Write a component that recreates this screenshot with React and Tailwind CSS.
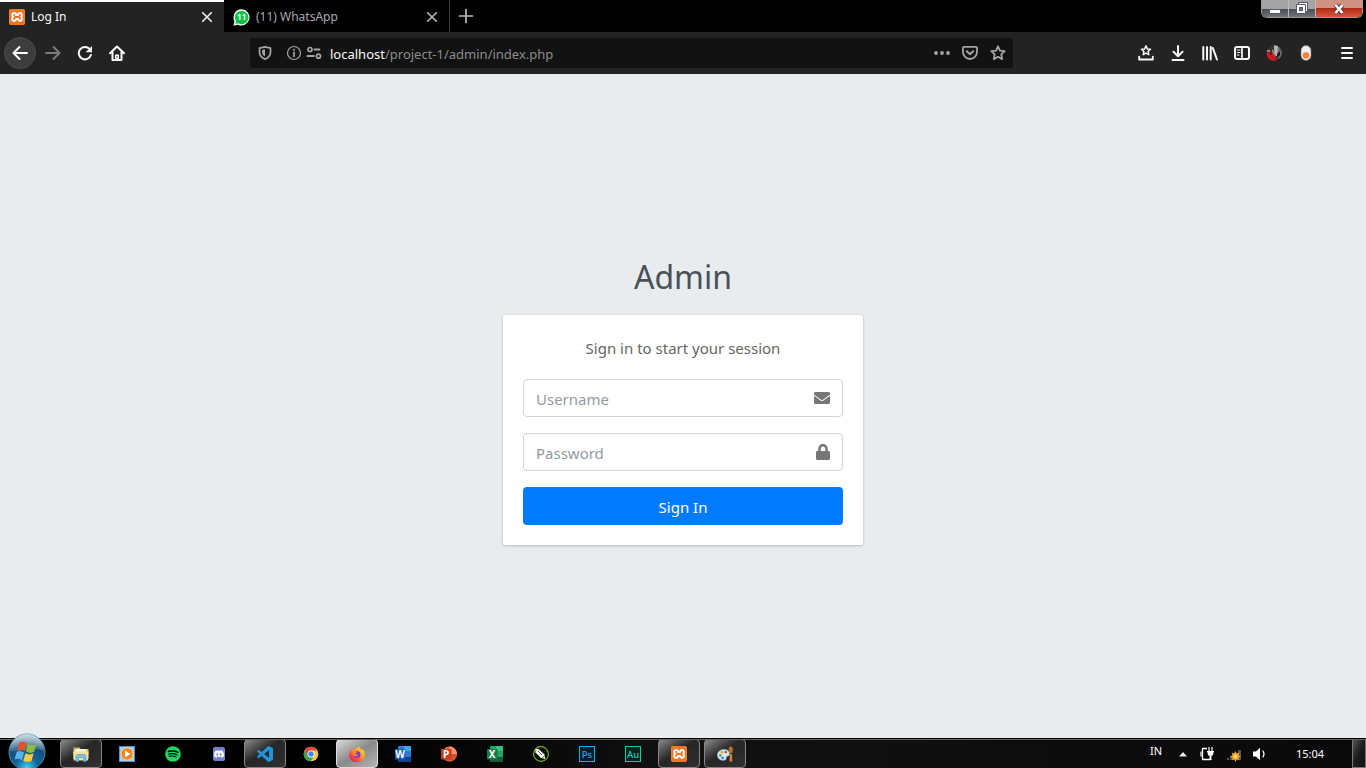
import React from "react";
import { FaEnvelope, FaLock, FaSpotify } from "react-icons/fa";
import { SiDiscord, SiXampp } from "react-icons/si";

const line = { fill: "none", stroke: "currentColor", strokeWidth: 2, strokeLinecap: "round", strokeLinejoin: "round" };

function Icon({ children, className = "size-4", box = "0 0 16 16" }) {
  return (
    <svg viewBox={box} className={`${className} shrink-0`} aria-hidden="true">
      {children}
    </svg>
  );
}

function XamppIcon() {
  return (
    <span className="flex size-4 items-center justify-center rounded-sm bg-white">
      <SiXampp className="size-4 text-[#f37623]" />
    </span>
  );
}

function CloseMark() {
  return (
    <Icon className="size-4">
      <path d="M3.7 3.7l8.6 8.6M12.3 3.7l-8.6 8.6" {...line} strokeWidth="1.6" />
    </Icon>
  );
}

function TabBar() {
  return (
    <div className="flex h-8 bg-black text-[12px] leading-4">
      <div className="flex w-56 items-center gap-1.5 border-t-2 border-white bg-[#232323] pr-[9px] pl-[9px] text-[#f9f9fa]">
        <XamppIcon />
        <span className="flex-1">Log In</span>
        <button type="button" aria-label="Close tab Log In" className="text-[#f0f0f0]">
          <CloseMark />
        </button>
      </div>
      <div className="flex w-[226px] items-center gap-1.5 border-r border-[#3a3a3a] pt-0.5 pr-[9px] pl-[9px] text-[#a9a9ab]">
        <Icon className="size-[17px]" box="0 0 17 17">
          <path d="M8.600.300a8.100 8.100 0 1 1-3.700 15.400L.400 16.700l1.100-4.400A8.100 8.100 0 0 1 8.600.300z" fill="#fff" />
          <path d="M8.600 1.700a6.800 6.800 0 1 1-3.500 12.600l-2.900.8.8-2.900A6.800 6.800 0 0 1 8.600 1.700z" fill="#0cc143" />
          <text x="8.700" y="11.400" fontSize="8" fontWeight="700" textAnchor="middle" fill="#fff">
            11
          </text>
        </Icon>
        <span className="flex-1">(11) WhatsApp</span>
        <button type="button" aria-label="Close tab WhatsApp" className="text-[#b8b8b8]">
          <CloseMark />
        </button>
      </div>
      <button type="button" aria-label="New tab" className="flex w-8 items-center justify-center text-[#bcbcbe]">
        <Icon>
          <path d="M8 1.500v13M1.500 8h13" {...line} strokeWidth="1.700" />
        </Icon>
      </button>
      <div className="mr-[3px] ml-auto flex h-[18px] overflow-hidden rounded-b-md border border-t-0 border-[#999]">
        <button
          type="button"
          aria-label="Minimize"
          className="flex w-[27px] items-center justify-center border-r border-[#b9b9b9] bg-linear-to-b from-[#a4a4a4] from-50% via-[#484b53] via-51% to-[#72737a]"
        >
          <Icon>
            <rect x="2.500" y="8.500" width="11" height="4" rx=".5" fill="#fff" stroke="#55586c" />
          </Icon>
        </button>
        <button
          type="button"
          aria-label="Restore"
          className="flex w-[27px] items-center justify-center border-r border-[#b9b9b9] bg-linear-to-b from-[#a4a4a4] from-50% via-[#484b53] via-51% to-[#72737a]"
        >
          <Icon>
            <path d="M4.500 1.500h9v9h-9z" fill="#fff" stroke="#55586c" />
            <path d="M2.500 3.500h9v9h-9z" fill="#fff" stroke="#55586c" />
            <rect x="5.500" y="6.500" width="3" height="3" fill="#777" stroke="#55586c" />
          </Icon>
        </button>
        <button
          type="button"
          aria-label="Close"
          className="flex w-[46px] items-center justify-center bg-linear-to-b from-[#cf9181] from-45% via-[#b02a12] via-50% to-[#d9583c]"
        >
          <Icon>
            <path d="M4.500 4l7 8M11.500 4l-7 8" stroke="#55404c" strokeWidth="4.500" />
            <path d="M4.500 4l7 8M11.500 4l-7 8" stroke="#fff" strokeWidth="2.600" />
          </Icon>
        </button>
      </div>
    </div>
  );
}

function ToolButton({ label, children, className = "text-[#f9f9fa]" }) {
  return (
    <button type="button" aria-label={label} className={`flex size-8 shrink-0 items-center justify-center rounded-full ${className}`}>
      {children}
    </button>
  );
}

const STAR = "M8 1.300l2 4.300 4.700.6-3.400 3.200.9 4.700L8 11.800l-4.200 2.300.9-4.700L1.300 6.200 6 5.600z";

function Toolbar() {
  return (
    <div className="flex h-[42px] items-center bg-[#232323] pr-[3px] pl-1">
      <ToolButton label="Back" className="mr-px border border-[#4c4c4c] bg-[#3d3d3d] text-white">
        <Icon>
          <path d="M15 8H1.500M7.500 2L1.500 8l6 6" {...line} />
        </Icon>
      </ToolButton>
      <ToolButton label="Forward" className="text-[#7b7b7b]">
        <Icon>
          <path d="M1 8h13.500M8.500 2l6 6-6 6" {...line} />
        </Icon>
      </ToolButton>
      <ToolButton label="Reload">
        <Icon>
          <path d="M12.600 4A6.200 6.200 0 1 0 13.900 10" {...line} />
          <path d="M15 1v6.300H8.700z" fill="currentColor" />
        </Icon>
      </ToolButton>
      <ToolButton label="Home">
        <Icon>
          <path d="M1 8.300L8 1.500l7 6.800M3.500 7v8h9V7" {...line} />
          <path d="M6 14.500V9.500h4v5z" fill="currentColor" />
          <path d="M8 11v1.500" stroke="#232323" />
        </Icon>
      </ToolButton>

      <div className="mx-[117px] flex h-[30px] min-w-0 flex-1 items-center rounded-xs bg-[#121212] pr-[7px] pl-[7px] text-[#a5a5a5]">
        <Icon>
          <path d="M8 1.800l5.500 1.300v4c0 3.600-2.300 5.800-5.500 7.200-3.200-1.400-5.500-3.600-5.500-7.200v-4z" {...line} strokeWidth="1.700" />
          <path d="M8 4.300v7.300c-1.700-1-2.900-2.300-2.900-4.500V5z" fill="currentColor" />
        </Icon>
        <Icon className="ml-[13px] size-4">
          <circle cx="8" cy="8" r="6.500" {...line} strokeWidth="1.200" />
          <path d="M8 7.300v4" {...line} strokeWidth="1.700" />
          <circle cx="8" cy="4.800" r="1" fill="currentColor" />
        </Icon>
        <Icon className="ml-1 size-4">
          <circle cx="4" cy="4.500" r="2" {...line} strokeWidth="1.700" />
          <path d="M8.500 4.500h5M1.500 11h6.500" {...line} strokeWidth="1.900" />
          <circle cx="12.500" cy="11.200" r="2" {...line} strokeWidth="1.700" />
        </Icon>
        <span className="ml-2 pt-px text-[13px] leading-5 text-[#8d8d8d]">
          <span className="text-[#f9f9fa]">localhost</span>/project-1/admin/index.php
        </span>
        <div className="ml-auto flex gap-3">
          <button type="button" aria-label="Page actions">
            <Icon>
              <g fill="currentColor">
                <circle cx="2" cy="8" r="1.900" />
                <circle cx="8" cy="8" r="1.900" />
                <circle cx="14" cy="8" r="1.900" />
              </g>
            </Icon>
          </button>
          <button type="button" aria-label="Save to Pocket">
            <Icon>
              <path d="M2 1.900h12a1 1 0 0 1 1 1V7A7 7 0 0 1 1 7V2.900a1 1 0 0 1 1-1z" {...line} strokeWidth="1.800" />
              <path d="M4.800 6.200L8 9.300l3.200-3.100" {...line} />
            </Icon>
          </button>
          <button type="button" aria-label="Bookmark this page">
            <Icon>
              <path d={STAR} {...line} strokeWidth="1.800" />
            </Icon>
          </button>
        </div>
      </div>

      <ToolButton label="Bookmarks menu">
        <Icon>
          <path d="M8 .9l1.300 3 3.200.4-2.400 2.200.7 3.200L8 8.100 5.200 9.700l.7-3.200-2.400-2.200 3.200-.4z" {...line} strokeWidth="1.500" />
          <path d="M1.200 11.800v2.700h13.600v-2.700" {...line} strokeWidth="1.900" />
        </Icon>
      </ToolButton>
      <ToolButton label="Downloads">
        <Icon>
          <path d="M8 1v10M3.500 6.800L8 11.200l4.500-4.400M2.500 15h11" {...line} />
        </Icon>
      </ToolButton>
      <ToolButton label="Library">
        <Icon>
          <path d="M1.300 2v12.500M5 2v12.500M8.700 2v12.500M10.800 3l4.200 11.500" {...line} />
        </Icon>
      </ToolButton>
      <ToolButton label="Sidebars">
        <Icon>
          <rect x="1" y="2" width="14" height="12" rx="2" {...line} />
          <path d="M8 2v12" {...line} strokeWidth="1.700" />
          <path d="M3.300 5h2.700M3.300 7.500h2.700M3.300 10h1.700" {...line} strokeWidth="1.100" />
        </Icon>
      </ToolButton>
      <ToolButton label="Account">
        <Icon>
          <clipPath id="avatar">
            <circle cx="8" cy="8" r="7.800" />
          </clipPath>
          <g clipPath="url(#avatar)">
            <path d="M0 0h16v16H0z" fill="#39332f" />
            <path d="M8 0h4l-.5 11-3 1z" fill="#b8babd" />
            <path d="M12 1h4v11l-4 2z" fill="#6d6c6b" />
            <path d="M1 8l4-1 4 4 .5 5H4L1 12z" fill="#d01820" />
            <path d="M1 5h3v2H1zM6 4l2 2v4L6 7z" fill="#b4776c" />
            <path d="M4 7l2 2-2 1zM11 9l3-3v4l-3 3z" fill="#171a20" />
            <path d="M9 10l2 2v4H9z" fill="#8e2025" />
          </g>
        </Icon>
      </ToolButton>
      <ToolButton label="Extension">
        <Icon>
          <rect x="3" y=".5" width="10" height="15" rx="5" fill="#eceded" stroke="#777" strokeWidth=".6" />
          <circle cx="8" cy="10.500" r="3.300" fill="#f78234" />
        </Icon>
      </ToolButton>
      <ToolButton label="Open menu" className="ml-[9px] text-[#f9f9fa]">
        <Icon>
          <path d="M3 3h10M3 8h10M3 13h10" {...line} />
        </Icon>
      </ToolButton>
    </div>
  );
}

function Field({ type, label, children }) {
  return (
    <label className="mb-4 flex h-[38px] items-center rounded border border-[#ced4da] bg-white pr-3 text-[#777]">
      <input
        type={type}
        aria-label={label}
        placeholder={label}
        className="h-full min-w-0 flex-1 bg-transparent pt-0.5 pl-3 text-[15px] text-[#495057] outline-none placeholder:text-[#939ba2]"
      />
      {children}
    </label>
  );
}

function LoginPage() {
  return (
    <main className="flex min-h-0 flex-1 flex-col items-center justify-center bg-[#e9ecef]">
      <div className="w-[360px] max-w-full">
        <h1 className="mb-3.5 pt-0.5 text-center text-[32px] leading-[48px] text-[#495057]">Admin</h1>
        <form
          onSubmit={(e) => e.preventDefault()}
          className="mb-4 rounded-xs bg-white p-5 shadow-[0_0_1px_rgba(0,0,0,0.13),0_1px_3px_rgba(0,0,0,0.2)]"
        >
          <p className="mb-5 pt-0.5 text-center text-[15px] leading-[22px] text-[#666]">Sign in to start your session</p>
          <Field type="text" label="Username">
            <FaEnvelope className="size-4" />
          </Field>
          <Field type="password" label="Password">
            <FaLock className="-mr-px size-4" />
          </Field>
          <button type="submit" className="h-[38px] w-full rounded bg-[#007bff] pt-0.5 text-[15px] text-white">
            Sign In
          </button>
        </form>
      </div>
    </main>
  );
}

function StartOrb() {
  return (
    <Icon className="size-[38px]" box="0 0 38 38">
      <defs>
        <radialGradient id="orb" cx=".5" cy=".95" r=".9">
          <stop offset="0" stopColor="#3fd5fa" />
          <stop offset=".35" stopColor="#12649c" />
          <stop offset=".7" stopColor="#164e7a" />
          <stop offset="1" stopColor="#7b9db3" />
        </radialGradient>
        <linearGradient id="gloss" x1="0" y1="0" x2="0" y2="1">
          <stop offset="0" stopColor="#fff" stopOpacity=".6" />
          <stop offset="1" stopColor="#fff" stopOpacity=".12" />
        </linearGradient>
      </defs>
      <circle cx="19" cy="19" r="18" fill="url(#orb)" stroke="#4b8cae" />
      <path d="M2 18a17 17 0 0 1 34 0c-9-5-22 2-34 0z" fill="url(#gloss)" />
      <path d="M11.500 9.500c2.700-1.200 5-.8 7.200.8l-2.200 7.900c-2.400-1.700-4.700-1.900-7.300-.9z" fill="#e2552b" />
      <path d="M20 11c2.700 1.500 5.200 1.600 8.300.3l-2.300 7.800c-2.700 1.200-5.300 1.100-8.100-.5z" fill="#8dbb3f" />
      <path d="M8.800 18.700c2.700-1.100 4.900-.8 7.300.9l-2.200 7.600c-2.400-1.600-4.700-1.800-7.400-.8z" fill="#58b2e8" />
      <path d="M17.500 20.200c2.700 1.500 5.200 1.600 8.100.4l-2.200 7.600c-2.900 1.200-5.400 1-8.200-.5z" fill="#fcc83c" />
    </Icon>
  );
}

function OfficeIcon({ letter, dark, mid, light, badge, round }) {
  return (
    <Icon>
      {round ? (
        <>
          <circle cx="8.500" cy="8" r="7.500" fill={mid} />
          <path d="M8.500.5A7.500 7.500 0 0 1 16 8H8.500z" fill={light} />
          <path d="M1 8h15a7.500 7.500 0 0 1-15 0z" fill={dark} />
        </>
      ) : (
        <>
          <rect x="3" y="0" width="13" height="16" rx="1" fill={mid} />
          <path d="M9 0h6a1 1 0 0 1 1 1v4H9z" fill={light} />
          <path d="M3 11h13v4a1 1 0 0 1-1 1H4a1 1 0 0 1-1-1z" fill={dark} />
        </>
      )}
      <rect x="0" y="3" width="10.500" height="10.500" rx="1" fill={badge} />
      <text x="5.200" y="12" fontSize="10" fontWeight="700" textAnchor="middle" fill="#fff">
        {letter}
      </text>
    </Icon>
  );
}

function AdobeIcon({ text, color, fill }) {
  return (
    <Icon>
      <rect x=".5" y=".5" width="15" height="15" fill={fill} stroke={color} />
      <text x="8" y="11.500" fontSize="9.500" fontWeight="500" textAnchor="middle" fill={color}>
        {text}
      </text>
    </Icon>
  );
}

const apps = [
  {
    name: "File Explorer",
    state: "open",
    icon: (
      <Icon className="size-[18px]" box="0 0 18 18">
        <path d="M1.500 2.500h6l1 1.500h8v10h-15z" fill="#e3bd62" />
        <path d="M3 4h11v3H3z" fill="#f7f2d8" />
        <path d="M3 3.200h2.500" stroke="#43b02a" />
        <path d="M1 6.500h15.500l-.5 9H1.800z" fill="#f7e098" />
        <path d="M4 16.500v-5q0-2 2-2h6q2 0 2 2v5h-2.500v-4h-5v4z" fill="#7cc2e8" stroke="#4b91bd" strokeWidth=".6" />
      </Icon>
    ),
  },
  {
    name: "Media Player",
    icon: (
      <Icon>
        <rect x=".5" y=".5" width="15" height="15" fill="#a5cdec" stroke="#5295c6" />
        <circle cx="8" cy="8" r="6" fill="#f58312" stroke="#fbc98a" />
        <path d="M6 4.500l5.500 3.500L6 11.500z" fill="#fff" />
      </Icon>
    ),
  },
  { name: "Spotify", icon: <FaSpotify className="size-4 text-[#1ed760]" /> },
  {
    name: "Discord",
    icon: (
      <span className="flex h-3.5 w-3 items-center justify-center rounded-xs bg-[#7181d0]">
        <SiDiscord className="size-2.5 text-white" />
      </span>
    ),
  },
  {
    name: "Visual Studio Code",
    state: "open",
    icon: (
      <Icon box="0 0 24 24">
        <path
          fill="#1f93dc"
          d="M23.150 2.587L18.210.210a1.494 1.494 0 0 0-1.705.290l-9.460 8.630-4.120-3.128a.999.999 0 0 0-1.276.057L.327 7.261A1 1 0 0 0 .326 8.740L3.899 12 .326 15.260a1 1 0 0 0 .001 1.479L1.650 17.940a.999.999 0 0 0 1.276.057l4.120-3.128 9.460 8.630a1.492 1.492 0 0 0 1.704.290l4.942-2.377A1.500 1.500 0 0 0 24 20.060V3.939a1.500 1.500 0 0 0-.850-1.352zm-5.146 14.861L10.826 12l7.178-5.448v10.896z"
        />
      </Icon>
    ),
  },
  {
    name: "Chrome",
    icon: (
      <Icon>
        <circle cx="8" cy="8" r="7.300" fill="#f9cb3c" />
        <path d="M1.700 4.400A7.300 7.300 0 0 1 14.400 4.600H8L5 9.700z" fill="#e2493c" />
        <path d="M1.700 4.400L5 9.700l3 1.700 2.500.2-3 3.700A7.300 7.300 0 0 1 1.700 4.400z" fill="#33a457" />
        <circle cx="8" cy="8" r="3.500" fill="#fff" />
        <circle cx="8" cy="8" r="2.700" fill="#4086f4" />
      </Icon>
    ),
  },
  {
    name: "Firefox",
    state: "active",
    icon: (
      <Icon>
        <defs>
          <linearGradient id="fox" x1=".9" y1=".1" x2=".2" y2=".9">
            <stop offset="0" stopColor="#ffe226" />
            <stop offset=".45" stopColor="#ff9425" />
            <stop offset="1" stopColor="#f5155d" />
          </linearGradient>
        </defs>
        <path d="M9.500 0c1 2.200 2.300 2.500 3.800 4.200.2-.5.200-.9 0-1.400 2 1.800 2.700 4 2.500 6A7.800 7.800 0 1 1 1.500 4.600l.3-2 1.300 1.200 2-.3C6.500 2 9 2.700 9.500 0z" fill="url(#fox)" />
        <circle cx="8" cy="8.600" r="3.500" fill="#7c36d4" />
        <path d="M3.500 5c2-.8 3 .3 5 .8-.3 1.200-2 1-2.200 2 .6 1 2 1.200 3.300.6-.8 2.400-4.500 2.400-6 0z" fill="#ff8a1c" />
      </Icon>
    ),
  },
  { name: "Word", icon: <OfficeIcon letter="W" dark="#103f91" mid="#2b7cd3" light="#41a5ee" badge="#185abd" /> },
  { name: "PowerPoint", icon: <OfficeIcon letter="P" dark="#d35230" mid="#ed6c47" light="#ff8f6b" badge="#c43e1c" round /> },
  { name: "Excel", icon: <OfficeIcon letter="X" dark="#185c37" mid="#21a366" light="#33c481" badge="#107c41" /> },
  {
    name: "CorelDRAW",
    icon: (
      <Icon>
        <circle cx="8" cy="8" r="7.400" fill="#080d03" stroke="#72b720" strokeWidth="1.100" />
        <path d="M2.500 2.800l3 .2 5.800 5.300 1 4.700-4.800-1.300-5-5.500z" fill="#fff" />
        <path d="M5 5l4 4M9.500 12l2-2.500" stroke="#333" strokeWidth=".8" />
      </Icon>
    ),
  },
  { name: "Photoshop", icon: <AdobeIcon text="Ps" color="#00b4f0" fill="#061e2b" /> },
  { name: "Audition", icon: <AdobeIcon text="Au" color="#00d2b0" fill="#06231f" /> },
  { name: "XAMPP", state: "open", icon: <XamppIcon /> },
  {
    name: "Paint",
    state: "open",
    icon: (
      <Icon>
        <path d="M7 3.500c4 0 6 2 5.500 5-.3 2-2.300 1-3 2.500-.5 1.200.3 2.700-2 3.300C3.500 15 .3 12.500.3 9.300S3 3.500 7 3.500z" fill="#d4e7f5" stroke="#7faccb" strokeWidth=".5" />
        <circle cx="3.300" cy="9.500" r="1.300" fill="#36a03e" />
        <circle cx="5" cy="6.300" r="1.300" fill="#e7a320" />
        <circle cx="8.800" cy="6" r="1.300" fill="#d93a2b" />
        <circle cx="5.600" cy="12" r="1.300" fill="#2b73cb" />
        <path d="M12.700 8h2.300l.3 7-1.500 1-1.300-1z" fill="#d98432" />
        <path d="M12.500 7L11.500 2.500 13.500 0 16 2l-.7 5z" fill="#b4712d" />
      </Icon>
    ),
  },
];

const taskStyles = {
  open: "rounded-sm border border-[#868686] bg-linear-to-br from-[#8c8c8c] via-[#262626] via-45% to-[#303030]",
  active: "rounded-sm border border-[#dedede] bg-linear-to-br from-[#dcdcdc] via-[#898989] via-50% to-[#b5b5b5]",
};

function Taskbar() {
  return (
    <footer className="relative flex h-[30px] shrink-0 items-stretch border-t border-black bg-linear-to-r from-black via-[#111] to-[#090909] text-white">
      <span className="pointer-events-none absolute inset-x-0 top-0 h-px bg-[#666]" />
      <button type="button" aria-label="Start" className="absolute -top-1.5 left-2 h-9 overflow-hidden">
        <StartOrb />
      </button>
      <nav aria-label="Taskbar" className="ml-15 flex gap-1">
        {apps.map((app) => (
          <button
            key={app.name}
            type="button"
            aria-label={app.name}
            className={`flex w-[42px] items-center justify-center ${taskStyles[app.state] || ""}`}
          >
            {app.icon}
          </button>
        ))}
      </nav>
      <div className="ml-auto flex items-center text-[11px] leading-4">
        <span className="mb-1.5 w-7">IN</span>
        <Icon className="h-4 w-[10px]" box="0 0 10 16">
          <path d="M1 10.500h8L5 6z" fill="#e8edf2" />
        </Icon>
        <Icon className="ml-3 size-4">
          <path d="M7 2.500H2.500v11h8" {...line} strokeWidth="1.300" strokeLinecap="butt" />
          <path d="M1 5.500v5" {...line} strokeWidth="1.200" strokeLinecap="butt" />
          <path d="M9 1v4M12 1v4" stroke="#fff" strokeWidth="1.200" />
          <path d="M7 5h7v1.200h-.7V8q0 1.500-1.800 1.800V14h-2V9.800Q7.700 9.500 7.700 8V6.200H7z" fill="#fff" />
        </Icon>
        <Icon className="ml-2.5 size-4">
          <path d="M1 12h2v2H1zM4 10h2v4H4zM8 7h2v7H8zM12 4h3v10h-3z" fill="#55585b" />
          <path d="M9.500 5l1.200 2.400 2.600-.8-.8 2.600L15 10.500l-2.500 1.200.8 2.600-2.600-.8-1.200 2.400-1.200-2.400-2.600.8.8-2.600L4 10.500l2.500-1.300-.8-2.600 2.600.8z" fill="#f4a51d" />
          <circle cx="9.500" cy="10.500" r="2" fill="#ffd768" />
        </Icon>
        <Icon className="ml-2.5 size-4">
          <path d="M1 5.500h3L8 1.800v12.400l-4-3.700H1z" fill="#fff" />
          <path d="M11 5q2 3 0 6" {...line} strokeWidth="1.200" />
        </Icon>
        <time className="ml-7 w-14">15:04</time>
        <button
          type="button"
          aria-label="Show desktop"
          className="h-full w-3.5 border border-[#777] bg-linear-to-br from-[#555] via-[#1c1c1c] via-50% to-[#111]"
        />
      </div>
    </footer>
  );
}

export default function App() {
  return (
    <div className="flex h-screen flex-col overflow-hidden font-['Noto_Sans','Open_Sans',sans-serif]">
      <header className="shrink-0">
        <TabBar />
        <Toolbar />
      </header>
      <LoginPage />
      <Taskbar />
    </div>
  );
}
